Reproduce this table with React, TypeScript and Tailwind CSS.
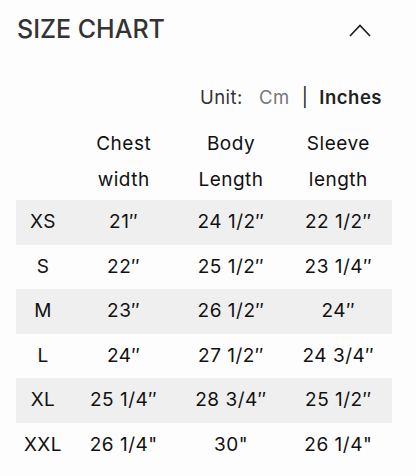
import React from "react";

const rows = [
  ["XS", "21″", "24 1/2″", "22 1/2″"],
  ["S", "22″", "25 1/2″", "23 1/4″"],
  ["M", "23″", "26 1/2″", "24″"],
  ["L", "24″", "27 1/2″", "24 3/4″"],
  ["XL", "25 1/4″", "28 3/4″", "25 1/2″"],
  ["XXL", "26 1/4\"", "30\"", "26 1/4\""],
];

export default function App() {
  return (
    <div
      className="w-[416px] h-[476px] bg-[#fdfdfd] overflow-hidden"
      style={{ fontFamily: "Inter, 'Noto Sans', sans-serif" }}
    >
      <div className="h-[60px] flex items-center justify-between pl-[17px] pr-[45px]">
        <span className="text-[25px] font-medium text-[#333333]">SIZE CHART</span>
        <svg width="22" height="13" viewBox="0 0 22 13" fill="none">
          <path d="M1 12 L11 1.5 L21 12" stroke="#1a1a1a" strokeWidth="1.6" />
        </svg>
      </div>
      <div className="mt-[26px] h-[22px] flex items-center justify-end pr-[34px] text-[18.5px] leading-[22px] tracking-[0.5px]">
        <span className="text-[#333333]">Unit:</span>
        <span className="ml-[16px] text-[#777777]">Cm</span>
        <span className="ml-[12px] text-[#222222]">|</span>
        <span className="ml-[11px] font-semibold text-[#222222]">Inches</span>
      </div>
      <div className="mt-[18px] ml-[16px] mr-[24px] text-[#111111] text-[19px] tracking-[0.5px]">
        <div className="grid grid-cols-[54px_1fr_1fr_1fr] h-[74px] leading-[36px] text-center">
          <div />
          <div className="flex flex-col items-center">
            <span>Chest</span>
            <span>width</span>
          </div>
          <div className="flex flex-col items-center">
            <span>Body</span>
            <span>Length</span>
          </div>
          <div className="flex flex-col items-center">
            <span>Sleeve</span>
            <span>length</span>
          </div>
        </div>
        {rows.map((r, i) => (
          <div
            key={r[0]}
            className={`grid grid-cols-[54px_1fr_1fr_1fr] h-[44.6px] items-center text-center ${
              i % 2 === 0 ? "bg-[#efefef]" : ""
            }`}
          >
            {r.map((c, j) => (
              <div key={j}>{c}</div>
            ))}
          </div>
        ))}
      </div>
    </div>
  );
}
